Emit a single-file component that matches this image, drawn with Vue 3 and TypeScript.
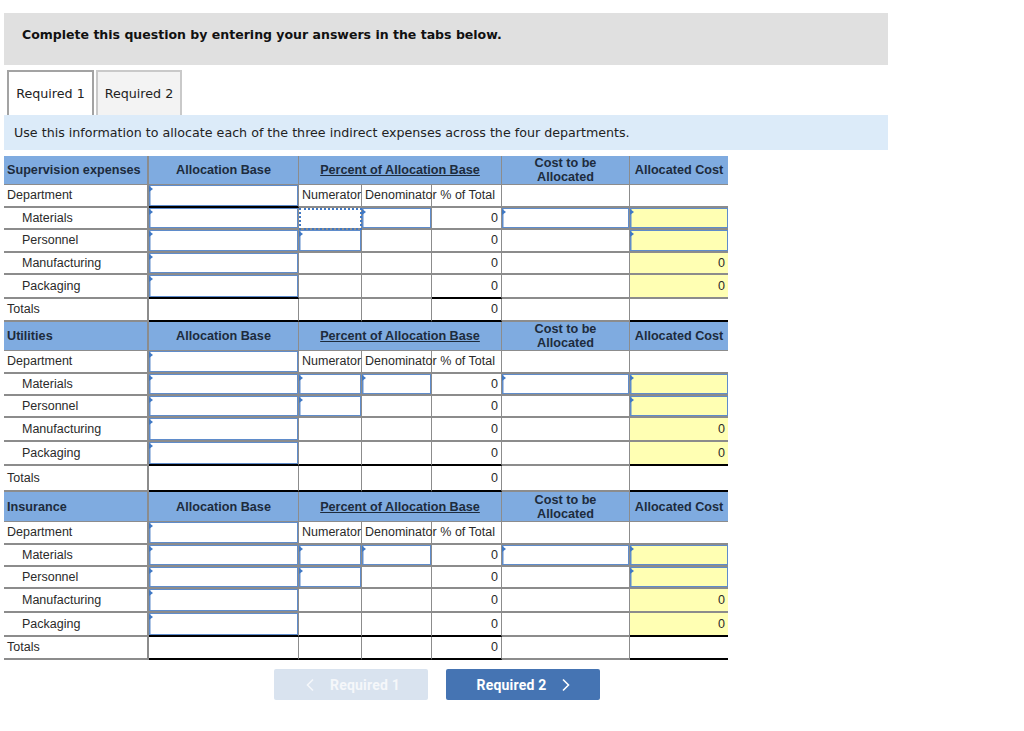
<script setup lang="ts">
type Cell = {
  text?: string
  kind?: "label" | "num" | "plain"
  entry?: boolean
  yellow?: boolean
  focus?: boolean
  heavy?: boolean
}

type Row = { name: string; sub: boolean; height: number; cells: Cell[] }

type Section = {
  title: string
  headHeight: number
  heights: number[]
  // columns (0-5) with a black rule under the row
  deptHeavy: number[]
  packagingHeavy: number[]
  totalsHeavy: number[]
  focusFirst: boolean
}

const sections: Section[] = [
  {
    title: "Supervision expenses",
    headHeight: 29,
    heights: [23, 22, 23, 22, 24, 23],
    deptHeavy: [0],
    packagingHeavy: [0, 3],
    totalsHeavy: [0, 1, 2, 3, 5],
    focusFirst: true,
  },
  {
    title: "Utilities",
    headHeight: 29,
    heights: [23, 22, 22, 24, 24, 26],
    deptHeavy: [],
    packagingHeavy: [0, 1, 2, 3, 5],
    totalsHeavy: [0, 1, 2, 3, 5],
    focusFirst: false,
  },
  {
    title: "Insurance",
    headHeight: 30,
    heights: [23, 22, 22, 24, 24, 23],
    deptHeavy: [],
    packagingHeavy: [0, 1, 2, 3, 5],
    totalsHeavy: [0, 1, 2, 3, 5],
    focusFirst: false,
  },
]

const buildRows = (s: Section): Row[] => {
  const mark = (cells: Cell[], heavy: number[]) =>
    cells.map((c, i) => ({ ...c, heavy: heavy.includes(i) }))

  return [
    {
      name: "Department",
      sub: false,
      height: s.heights[0],
      cells: mark(
        [
          { entry: true },
          { text: "Numerator", kind: "label" },
          { text: "Denominator", kind: "label" },
          { text: "% of Total", kind: "plain" },
          {},
          {},
        ],
        s.deptHeavy,
      ),
    },
    {
      name: "Materials",
      sub: true,
      height: s.heights[1],
      cells: [
        { entry: true },
        s.focusFirst ? { focus: true } : { entry: true },
        { entry: true },
        { text: "0", kind: "num" },
        { entry: true },
        { entry: true, yellow: true },
      ],
    },
    {
      name: "Personnel",
      sub: true,
      height: s.heights[2],
      cells: [
        { entry: true },
        { entry: true },
        {},
        { text: "0", kind: "num" },
        {},
        { entry: true, yellow: true },
      ],
    },
    {
      name: "Manufacturing",
      sub: true,
      height: s.heights[3],
      cells: [
        { entry: true },
        {},
        {},
        { text: "0", kind: "num" },
        {},
        { text: "0", kind: "num", yellow: true },
      ],
    },
    {
      name: "Packaging",
      sub: true,
      height: s.heights[4],
      cells: mark(
        [
          { entry: true },
          {},
          {},
          { text: "0", kind: "num" },
          {},
          { text: "0", kind: "num", yellow: true },
        ],
        s.packagingHeavy,
      ),
    },
    {
      name: "Totals",
      sub: false,
      height: s.heights[5],
      cells: mark([{}, {}, {}, { text: "0", kind: "num" }, {}, {}], s.totalsHeavy),
    },
  ]
}
</script>

<template>
  <main class="page">
    <div class="banner">Complete this question by entering your answers in the tabs below.</div>

    <div class="tabs">
      <button class="tab active">Required 1</button>
      <button class="tab">Required 2</button>
    </div>

    <div class="info">Use this information to allocate each of the three indirect expenses across the four departments.</div>

    <table class="sheet">
      <colgroup>
        <col class="c-name" />
        <col class="c-base" />
        <col class="c-num" />
        <col class="c-den" />
        <col class="c-pct" />
        <col class="c-cost" />
        <col class="c-alloc" />
      </colgroup>
      <tbody v-for="s in sections" :key="s.title">
        <tr class="head" :style="{ height: s.headHeight + 'px' }">
          <th class="first">{{ s.title }}</th>
          <th>Allocation Base</th>
          <th colspan="3"><u>Percent of Allocation Base</u></th>
          <th class="wrap">Cost to be<br />Allocated</th>
          <th>Allocated Cost</th>
        </tr>
        <tr v-for="r in buildRows(s)" :key="r.name" :style="{ height: r.height + 'px' }">
          <td class="name" :class="{ sub: r.sub }">{{ r.name }}</td>
          <td
            v-for="(c, i) in r.cells"
            :key="i"
            :class="[c.kind, { entry: c.entry, yellow: c.yellow, focus: c.focus, heavy: c.heavy }]"
          >{{ c.text }}</td>
        </tr>
      </tbody>
    </table>

    <nav class="pager">
      <button class="page-btn off">
        <svg width="10" height="14" viewBox="0 0 10 14"><path d="M8 1.5 2.5 7 8 12.5" /></svg>
        <span>Required 1</span>
      </button>
      <button class="page-btn on">
        <span>Required 2</span>
        <svg width="10" height="14" viewBox="0 0 10 14"><path d="M2 1.5 7.5 7 2 12.5" /></svg>
      </button>
    </nav>
  </main>
</template>

<style>
body {
  background: #fff;
}
</style>

<style scoped>
.page {
  padding: 13px 0 0 4px;
  width: 1020px;
  box-sizing: border-box;
  font-family: "Liberation Sans", Arial, sans-serif;
}

.banner {
  width: 884px;
  height: 52px;
  box-sizing: border-box;
  padding: 0 18px;
  background: #e0e0e0;
  color: #111;
  font: bold 12.53px/44px "DejaVu Sans", Verdana, sans-serif;
}

.tabs {
  display: flex;
  gap: 2px;
  margin: 5px 0 0 3px;
  height: 45px;
}

.tab {
  width: 87px;
  padding: 0;
  border: 2px solid #c9c9c9;
  border-bottom: 0;
  background: #f3f3f3;
  color: #222;
  font: 12.7px "DejaVu Sans", Verdana, sans-serif;
}

.tab + .tab {
  width: 86px;
}

.tab.active {
  border-color: #a3a3a3;
  background: #fff;
}

.info {
  width: 884px;
  height: 35px;
  box-sizing: border-box;
  padding-left: 10px;
  background: #dcebf9;
  color: #222;
  font: 12.67px/35px "DejaVu Sans", Verdana, sans-serif;
}

.sheet {
  margin-top: 6px;
  table-layout: fixed;
  width: 724px;
  border-collapse: separate;
  border-spacing: 0;
  font-size: 12.5px;
  color: #2a2a2a;
}

.c-name { width: 145px; }
.c-base { width: 150px; }
.c-num { width: 63px; }
.c-den { width: 70px; }
.c-pct { width: 70px; }
.c-cost { width: 128px; }
.c-alloc { width: 98px; }

th,
td {
  box-sizing: border-box;
  padding: 0 0 1px;
  border-bottom: 2px solid #8c8c8c;
  border-right: 1px solid #8c8c8c;
  white-space: nowrap;
  position: relative;
}

.name,
.first {
  border-right-width: 2px;
}

td:last-child,
th:last-child {
  border-right: 0;
}

.head th {
  padding: 0;
  border-bottom-width: 1px;
  background: #7fabe0;
  color: #1d2b3d;
  font-size: 12.65px;
  font-weight: bold;
  text-align: center;
  line-height: 14px;
}

.head .first {
  padding-left: 3px;
  text-align: left;
}

.head .wrap {
  white-space: normal;
}

.name {
  padding-left: 3px;
}

.name.sub {
  padding-left: 18px;
}

.label {
  padding-left: 3px;
  overflow: visible;
}

.plain {
  padding-right: 6px;
  text-align: right;
}

.num {
  padding-right: 3px;
  text-align: right;
}

.yellow {
  background: #ffffb3;
}

.heavy {
  border-bottom-color: #000;
}

.entry {
  box-shadow: inset 1.5px 1px 0 #5f8ccb, inset -1px -1px 0 #5f8ccb;
}

.entry::before {
  content: "";
  position: absolute;
  left: 0;
  top: 1px;
  border-left: 4px solid #3f78c4;
  border-top: 3px solid transparent;
  border-bottom: 3px solid transparent;
}

.focus {
  outline: 2px dotted #3f78c4;
  outline-offset: -2px;
}

.pager {
  display: flex;
  gap: 18px;
  margin: 9px 0 0 270px;
}

.page-btn {
  display: flex;
  align-items: center;
  justify-content: center;
  gap: 15px;
  width: 154px;
  height: 31px;
  padding: 0;
  border: 0;
  border-radius: 2px;
  font: bold 14px Roboto, "Liberation Sans", sans-serif;
  letter-spacing: 0.2px;
  color: #fff;
}

.page-btn svg {
  fill: none;
  stroke: currentColor;
  stroke-width: 1.6;
}

.off {
  padding-left: 3px;
  background: #d9e3ef;
  color: #f5f7fa;
}

.on {
  padding-left: 2px;
  background: #4574b3;
}
</style>
